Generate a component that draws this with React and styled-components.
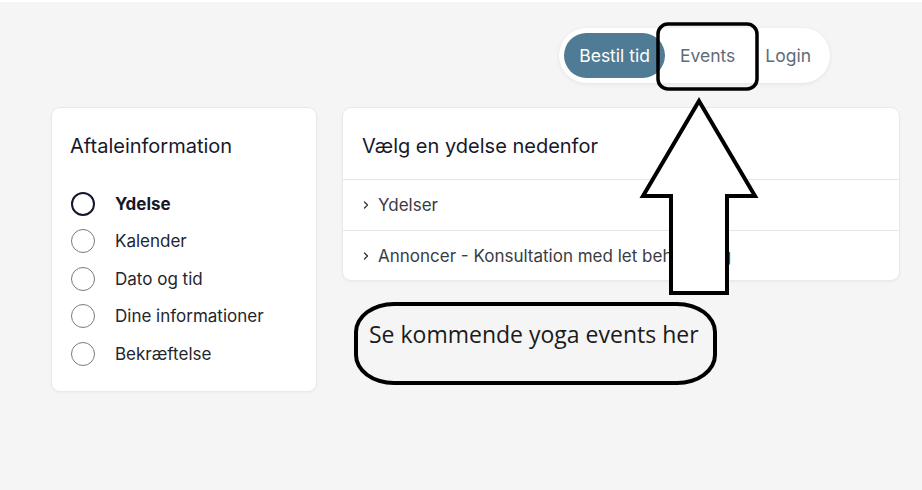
import React from 'react';
import styled, { createGlobalStyle } from 'styled-components';

const GlobalStyle = createGlobalStyle`
  html, body {
    margin: 0;
    padding: 0;
    background: #f5f5f5;
  }
  body {
    font-family: Inter, "Noto Sans", sans-serif;
    color: #1c1c28;
  }
`;

const steps = ['Ydelse', 'Kalender', 'Dato og tid', 'Dine informationer', 'Bekræftelse'];
const services = ['Ydelser', 'Annoncer - Konsultation med let behandling'];

const Page = styled.div`
  position: relative;
  width: 922px;
  height: 490px;
  box-sizing: border-box;
  border-top: 2px solid #ffffff;
  overflow: hidden;
`;

const Header = styled.header`
  display: flex;
  justify-content: flex-end;
  padding: 26px 92px 0 0;
`;

const NavPill = styled.nav`
  display: flex;
  align-items: center;
  height: 55px;
  box-sizing: border-box;
  padding: 5px 4px 5px 5px;
  background: #ffffff;
  border-radius: 999px;
  box-shadow: 0 1px 4px rgba(0, 0, 0, 0.08);
`;

const NavItem = styled.a`
  display: flex;
  align-items: center;
  height: 45px;
  padding: 0 15px;
  border-radius: 999px;
  font-size: 17.5px;
  text-decoration: none;
  cursor: pointer;
  background: ${p => (p.$active ? '#4f7b94' : 'transparent')};
  color: ${p => (p.$active ? '#ffffff' : '#5f6b78')};
`;

const Content = styled.main`
  display: flex;
  align-items: flex-start;
  gap: 25px;
  padding: 24px 22px 0 51px;
`;

const Card = styled.section`
  background: #ffffff;
  border: 1px solid #e9e9e9;
  border-radius: 9px;
  box-shadow: 0 1px 3px rgba(0, 0, 0, 0.04);
  box-sizing: border-box;
`;

const InfoCard = styled(Card)`
  width: 266px;
  padding: 26px 18px 25px 18px;
`;

const ServiceCard = styled(Card)`
  flex: 1;
  overflow: hidden;
`;

const CardTitle = styled.h2`
  margin: 0;
  font-size: 20px;
  font-weight: 400;
  line-height: 24px;
  color: #17182a;
`;

const StepList = styled.ul`
  list-style: none;
  margin: 34px 0 0 0;
  padding: 0;
  display: flex;
  flex-direction: column;
  gap: 13.4px;
`;

const Step = styled.li`
  display: flex;
  align-items: center;
  gap: 20px;
  height: 24px;
  padding-left: 1px;
  font-size: 17px;
  font-weight: ${p => (p.$current ? 700 : 400)};
  color: ${p => (p.$current ? '#15182b' : '#24262e')};
`;

const StepDot = styled.span`
  width: 24px;
  height: 24px;
  box-sizing: border-box;
  border-radius: 50%;
  border: ${p => (p.$current ? '2px solid #15182b' : '1px solid #7a7a7a')};
  flex-shrink: 0;
`;

const ServiceHeader = styled.div`
  height: 72px;
  box-sizing: border-box;
  padding: 26px 19px 0 19px;
  border-bottom: 1px solid #e6e6e6;
`;

const ServiceRow = styled.div`
  display: flex;
  align-items: center;
  gap: 8px;
  height: 50px;
  box-sizing: border-box;
  padding: 0 19px 0 19px;
  font-size: 17px;
  color: #3a3c43;
  & + & {
    border-top: 1px solid #e6e6e6;
  }
`;

const Chevron = () => (
  <svg width="8" height="10" viewBox="0 0 8 10" fill="none">
    <path d="M2.5 2 L5.5 5 L2.5 8" stroke="#35373e" strokeWidth="1.4" strokeLinecap="round" strokeLinejoin="round" />
  </svg>
);

const Callout = styled.div`
  position: absolute;
  left: 354px;
  top: 300px;
  width: 363px;
  height: 83px;
  box-sizing: border-box;
  border: 4px solid #000000;
  border-radius: 40px / 30px;
  padding: 12px 0 0 11px;
  font-family: "Open Sans", "Noto Sans", sans-serif;
  font-size: 23px;
  color: #1b1b1b;
`;

const Markup = styled.svg`
  position: absolute;
  left: 0;
  top: 0;
  pointer-events: none;
`;

export default function App() {
  return (
    <>
      <GlobalStyle />
      <Page>
        <Header>
          <NavPill>
            <NavItem $active>Bestil tid</NavItem>
            <NavItem>Events</NavItem>
            <NavItem>Login</NavItem>
          </NavPill>
        </Header>
        <Content>
          <InfoCard>
            <CardTitle>Aftaleinformation</CardTitle>
            <StepList>
              {steps.map((s, i) => (
                <Step key={s} $current={i === 0}>
                  <StepDot $current={i === 0} />
                  {s}
                </Step>
              ))}
            </StepList>
          </InfoCard>
          <ServiceCard>
            <ServiceHeader>
              <CardTitle>Vælg en ydelse nedenfor</CardTitle>
            </ServiceHeader>
            {services.map(s => (
              <ServiceRow key={s}>
                <Chevron />
                {s}
              </ServiceRow>
            ))}
          </ServiceCard>
        </Content>
        <Callout>Se kommende yoga events her</Callout>
        <Markup width="922" height="490" viewBox="0 0 922 490">
          <rect x="658" y="22" width="99" height="65" rx="10" fill="none" stroke="#000" strokeWidth="3.5" />
          <path
            d="M699 99 L755 194 L727 194 L727 291 L671 291 L671 194 L643 194 Z"
            fill="#fff"
            stroke="#000"
            strokeWidth="4"
            strokeLinejoin="miter"
          />
        </Markup>
      </Page>
    </>
  );
}
